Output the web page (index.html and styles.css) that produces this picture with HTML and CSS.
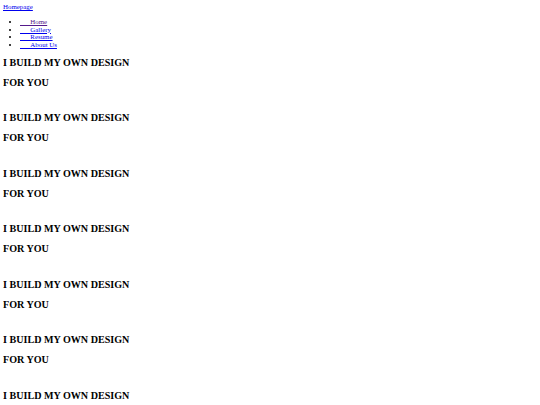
FILE: index.html
```html
<!DOCTYPE html>
<html>
<head>
<meta charset="utf-8">
<title>Homepage</title>
<link rel="stylesheet" href="styles.css">
</head>
<body>
<header class="top">
  <a class="brand" href="#">Homepage</a>
  <ul class="menu">
    <li><a class="visited" href="#">&nbsp;&nbsp;&nbsp;&nbsp;&nbsp;&nbsp;Home</a></li>
    <li><a href="#">&nbsp;&nbsp;&nbsp;&nbsp;&nbsp;&nbsp;Gallery</a></li>
    <li><a href="#">&nbsp;&nbsp;&nbsp;&nbsp;&nbsp;&nbsp;Resume</a></li>
    <li><a href="#">&nbsp;&nbsp;&nbsp;&nbsp;&nbsp;&nbsp;About Us</a></li>
  </ul>
</header>
<main class="content">
  <section class="group"><h2 class="title">I BUILD MY OWN DESIGN</h2><h2 class="title">FOR YOU</h2></section>
  <section class="group"><h2 class="title">I BUILD MY OWN DESIGN</h2><h2 class="title">FOR YOU</h2></section>
  <section class="group"><h2 class="title">I BUILD MY OWN DESIGN</h2><h2 class="title">FOR YOU</h2></section>
  <section class="group"><h2 class="title">I BUILD MY OWN DESIGN</h2><h2 class="title">FOR YOU</h2></section>
  <section class="group"><h2 class="title">I BUILD MY OWN DESIGN</h2><h2 class="title">FOR YOU</h2></section>
  <section class="group"><h2 class="title">I BUILD MY OWN DESIGN</h2><h2 class="title">FOR YOU</h2></section>
  <section class="group"><h2 class="title">I BUILD MY OWN DESIGN</h2><h2 class="title">FOR YOU</h2></section>
</main>
</body>
</html>
```
FILE: styles.css
```css
html, body {
  background: #ffffff;
}
body {
  margin: 3px;
  font-family: "Liberation Serif", "Times New Roman", serif;
  font-size: 6.9px;
  line-height: 7.6px;
  color: #000000;
}
a {
  color: #0000ee;
  text-decoration: underline;
}
a.visited {
  color: #551a8b;
}
.top {
  display: block;
}
.brand {
  display: inline-block;
  line-height: 8px;
}
.menu {
  margin: 7px 0 0;
  padding-left: 17px;
  list-style: disc;
}
.menu li {
  line-height: 7.6px;
}
.content {
  margin-top: 8.5px;
}
.group {
  display: flex;
  flex-direction: column;
  gap: 8px;
  margin-bottom: 23.5px;
}
.title {
  margin: 0;
  font-size: 10.1px;
  line-height: 12px;
  font-weight: bold;
}
```
